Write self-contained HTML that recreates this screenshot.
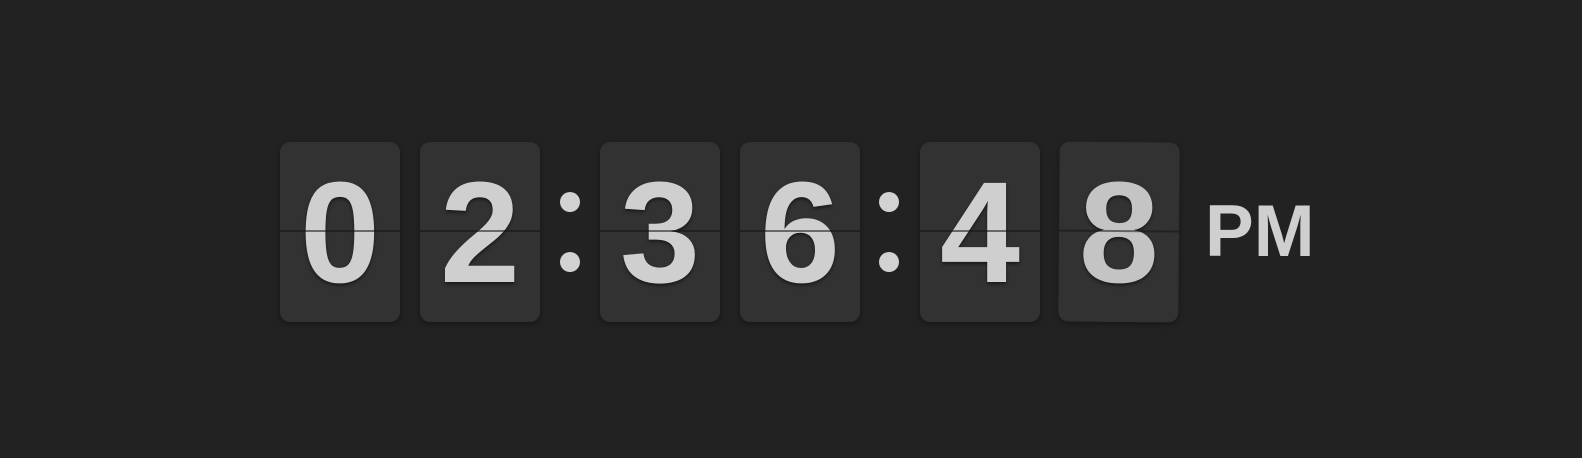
<!DOCTYPE html>
<html><head><style>
html,body{margin:0;padding:0;background:#222222;width:1582px;height:458px;overflow:hidden}
.c{position:absolute;top:142px;width:120px;height:180px;background:#323232;border-radius:10px;box-shadow:0 2px 6px rgba(0,0,0,.35);overflow:hidden}
.c span{position:absolute;left:0;width:120px;text-align:center;top:19px;font:bold 144px/144px "Liberation Sans",sans-serif;color:#cfcfcf;text-shadow:0 2px 3px rgba(0,0,0,.5)}
.c i{position:absolute;left:0;top:88px;width:120px;height:2px;background:rgba(20,20,20,.55)}
.d{position:absolute;width:20px;height:20px;border-radius:50%;background:#d2d2d2}
.pm{position:absolute;left:1205px;top:195px;font:bold 73px/73px "Liberation Sans",sans-serif;color:#cfcfcf}
</style></head><body>
<div class="c" style="left:280px"><span>0</span><i></i></div>
<div class="c" style="left:420px"><span>2</span><i></i></div>
<div class="d" style="left:560px;top:192px"></div><div class="d" style="left:560px;top:252px"></div>
<div class="c" style="left:600px"><span>3</span><i></i></div>
<div class="c" style="left:740px"><span>6</span><i></i></div>
<div class="d" style="left:879px;top:192px"></div><div class="d" style="left:879px;top:252px"></div>
<div class="c" style="left:920px"><span>4</span><i></i></div>
<div class="c" style="left:1059px;transform:rotate(0.5deg)"><span style="color:#c4c4c4">8</span><i></i></div>
<div class="pm">PM</div>
</body></html>
